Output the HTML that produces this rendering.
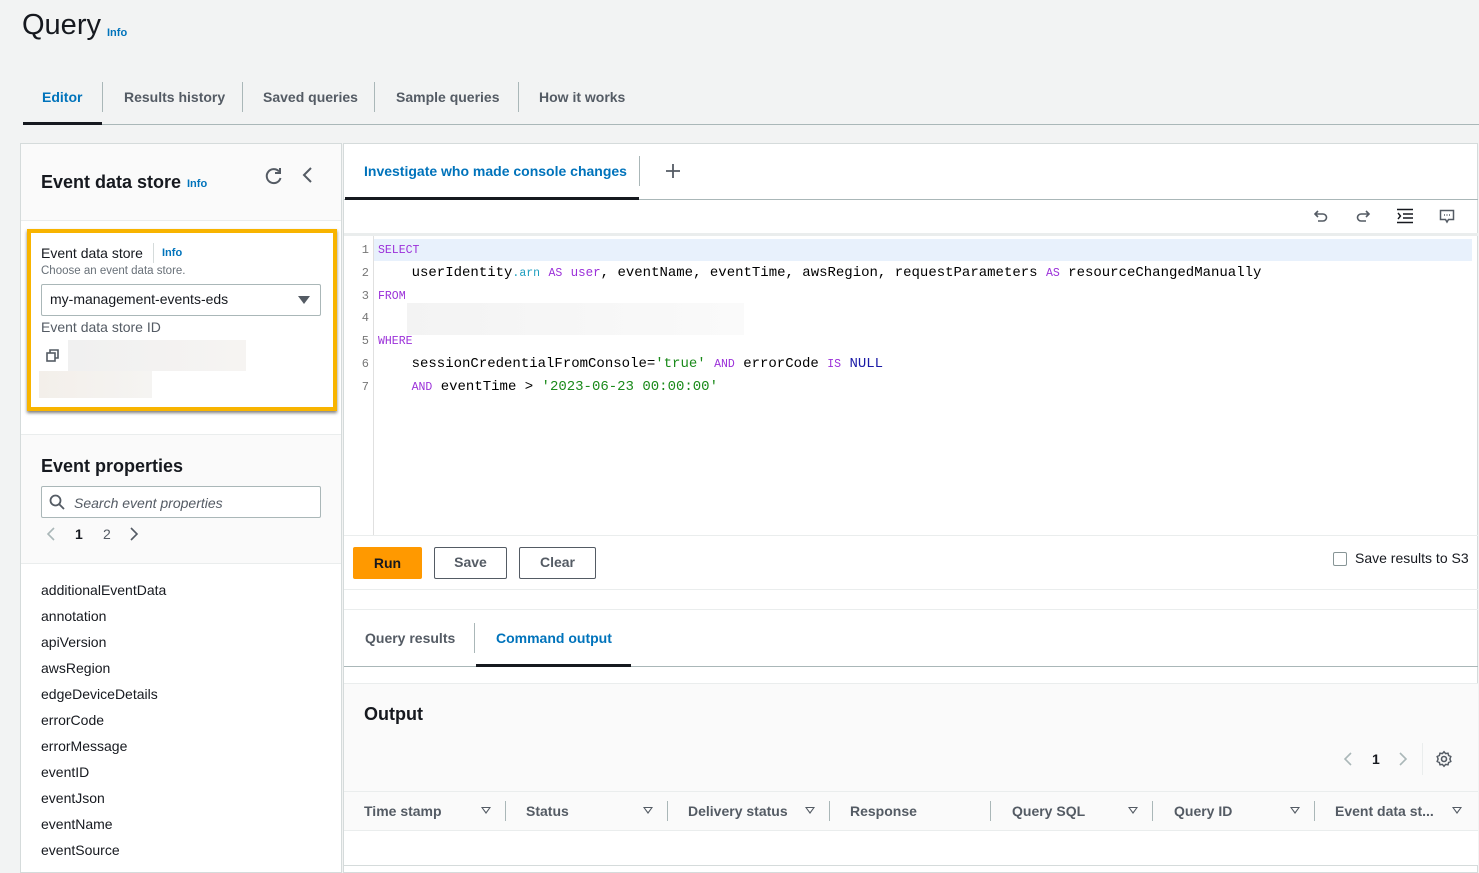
<!DOCTYPE html>
<html><head><meta charset="utf-8"><style>
*{margin:0;padding:0;box-sizing:border-box}
body{width:1479px;height:869px;overflow:hidden;background:#f2f3f3;font-family:"Liberation Sans",sans-serif;color:#16191f;position:relative;font-size:14px}
.a{position:absolute;white-space:nowrap}
.b{font-weight:bold}
.info{color:#0073bb;font-size:11px;font-weight:bold}
.tab{color:#545b64;font-weight:bold;font-size:14px}
.sep{position:absolute;width:1px;background:#aab7b8}
.hl{position:absolute;height:1px;background:#eaeded}
.mono{font-family:"Liberation Mono",monospace;font-size:14px;color:#000}
.mono div{height:22.8px;line-height:22.8px;overflow:visible}
.kw{font-size:11.5px;color:#9b30d9}
.ln{font-family:"Liberation Mono",monospace;font-size:12px;color:#777;width:14px;text-align:right}
.btn{position:absolute;border:1px solid #545b64;border-radius:2px;background:#fff;color:#545b64;font-weight:bold;text-align:center;line-height:29px}
.th{color:#545b64;font-weight:bold;font-size:14px}
.tri{position:absolute;width:0;height:0;border-left:5px solid transparent;border-right:5px solid transparent;border-top:7px solid #545b64}
.tri::after{content:"";position:absolute;left:-3px;top:-6px;border-left:3px solid transparent;border-right:3px solid transparent;border-top:4px solid #fff}
</style></head><body>
<div class="a" style="left:22px;top:9px;font-size:29px;color:#16191f">Query</div>
<div class="a info" style="left:107px;top:27px">Info</div>

<div class="a tab" style="left:42px;top:89px;color:#0073bb">Editor</div>
<div class="sep" style="left:102px;top:82px;height:30px"></div>
<div class="a tab" style="left:124px;top:89px">Results history</div>
<div class="sep" style="left:242px;top:82px;height:30px"></div>
<div class="a tab" style="left:263px;top:89px">Saved queries</div>
<div class="sep" style="left:374px;top:82px;height:30px"></div>
<div class="a tab" style="left:396px;top:89px">Sample queries</div>
<div class="sep" style="left:518px;top:82px;height:30px"></div>
<div class="a tab" style="left:539px;top:89px">How it works</div>
<div class="a" style="left:23px;top:124px;width:1456px;height:1px;background:#aab7b8"></div>
<div class="a" style="left:23px;top:122px;width:79px;height:3px;background:#16191f"></div>

<div class="a" style="left:20px;top:143px;width:322px;height:730px;background:#fff;border:1px solid #d5dbdb"></div>
<div class="a" style="left:21px;top:144px;width:320px;height:77px;background:#fafafa;border-bottom:1px solid #eaeded"></div>
<div class="a b" style="left:41px;top:172px;font-size:18px">Event data store</div>
<div class="a info" style="left:187px;top:178px">Info</div>
<svg class="a" style="left:264px;top:166px" width="20" height="20" viewBox="0 0 20 20"><path d="M15 5.5A7 7 0 1 0 16.5 12" fill="none" stroke="#545b64" stroke-width="2"/><path d="M16 2v5h-5" fill="none" stroke="#545b64" stroke-width="2"/></svg>
<svg class="a" style="left:300px;top:166px" width="16" height="18" viewBox="0 0 16 18"><path d="M11 2L4 9l7 7" fill="none" stroke="#545b64" stroke-width="2"/></svg>

<div class="a" style="left:27px;top:229px;width:310px;height:182px;border:4px solid #f8b400;background:#fff;box-shadow:0 2px 3px rgba(0,0,0,.5)"></div>
<div class="a" style="left:41px;top:245px;font-size:14px">Event data store</div>
<div class="sep" style="left:153px;top:243px;height:20px;background:#d5dbdb"></div>
<div class="a info" style="left:162px;top:247px">Info</div>
<div class="a" style="left:41px;top:265px;font-size:11.5px;color:#687078">Choose an event data store.</div>
<div class="a" style="left:41px;top:284px;width:280px;height:32px;border:1px solid #aab7b8;border-radius:2px"></div>
<div class="a" style="left:50px;top:291px;font-size:14px">my-management-events-eds</div>
<div class="a" style="left:298px;top:296px;border-left:6px solid transparent;border-right:6px solid transparent;border-top:8px solid #545b64"></div>
<div class="a" style="left:41px;top:319px;font-size:14px;color:#545b64">Event data store ID</div>
<svg class="a" style="left:45px;top:348px" width="16" height="16" viewBox="0 0 16 16"><rect x="2" y="5" width="8" height="8" fill="none" stroke="#545b64" stroke-width="1.6"/><path d="M5 5V2h8v8h-3" fill="none" stroke="#545b64" stroke-width="1.6"/></svg>
<div class="a" style="left:68px;top:340px;width:178px;height:31px;background:linear-gradient(90deg,#f0f0f0,#f6f4f2)"></div>
<div class="a" style="left:39px;top:371px;width:113px;height:27px;background:linear-gradient(90deg,#f3efea,#f5f4f2)"></div>

<div class="a" style="left:21px;top:434px;width:320px;height:130px;background:#fafafa;border-top:1px solid #eaeded;border-bottom:1px solid #eaeded"></div>
<div class="a b" style="left:41px;top:456px;font-size:18px">Event properties</div>
<div class="a" style="left:41px;top:486px;width:280px;height:32px;border:1px solid #aab7b8;border-radius:2px;background:#fff"></div>
<svg class="a" style="left:49px;top:494px" width="16" height="16" viewBox="0 0 16 16"><circle cx="6.5" cy="6.5" r="5" fill="none" stroke="#545b64" stroke-width="1.8"/><path d="M10 10l5 5" stroke="#545b64" stroke-width="1.8"/></svg>
<div class="a" style="left:74px;top:495px;font-style:italic;color:#545b64">Search event properties</div>
<svg class="a" style="left:45px;top:526px" width="12" height="16" viewBox="0 0 12 16"><path d="M9 2L3 8l6 6" fill="none" stroke="#aab7b8" stroke-width="1.6"/></svg>
<div class="a b" style="left:75px;top:526px">1</div>
<div class="a" style="left:103px;top:526px;color:#545b64">2</div>
<svg class="a" style="left:128px;top:526px" width="12" height="16" viewBox="0 0 12 16"><path d="M3 2l6 6-6 6" fill="none" stroke="#545b64" stroke-width="1.6"/></svg>

<div class="a" style="left:41px;top:577px;line-height:26px;font-size:14px">additionalEventData<br>annotation<br>apiVersion<br>awsRegion<br>edgeDeviceDetails<br>errorCode<br>errorMessage<br>eventID<br>eventJson<br>eventName<br>eventSource</div>

<div class="a" style="left:343px;top:143px;width:1135px;height:730px;background:#fff;border:1px solid #d5dbdb"></div>
<div class="a b" style="left:364px;top:163px;color:#0073bb;font-size:14px">Investigate who made console changes</div>
<div class="sep" style="left:639px;top:156px;height:30px"></div>
<svg class="a" style="left:664px;top:162px" width="18" height="18" viewBox="0 0 18 18"><path d="M9 2v14M2 9h14" stroke="#545b64" stroke-width="1.8"/></svg>
<div class="a" style="left:344px;top:199px;width:1134px;height:1px;background:#aab7b8"></div>
<div class="a" style="left:345px;top:197px;width:294px;height:3px;background:#16191f"></div>
<svg class="a" style="left:1313px;top:208px" width="16" height="16" viewBox="0 0 16 16"><path d="M5 3L2 6l3 3" fill="none" stroke="#545b64" stroke-width="1.6"/><path d="M2 6h8a3.5 3.5 0 0 1 0 7H5" fill="none" stroke="#545b64" stroke-width="1.6"/></svg>
<svg class="a" style="left:1355px;top:208px" width="16" height="16" viewBox="0 0 16 16"><path d="M11 3l3 3-3 3" fill="none" stroke="#545b64" stroke-width="1.6"/><path d="M14 6H6a3.5 3.5 0 0 0 0 7h5" fill="none" stroke="#545b64" stroke-width="1.6"/></svg>
<svg class="a" style="left:1396px;top:208px" width="18" height="16" viewBox="0 0 18 16"><path d="M1 1.5h16M7 6h10M7 10h10M1 14.5h16" stroke="#16191f" stroke-width="1.6"/><path d="M2 5l2.5 3L2 11" fill="none" stroke="#16191f" stroke-width="1.4"/></svg>
<svg class="a" style="left:1439px;top:209px" width="16" height="16" viewBox="0 0 16 16"><path d="M1.5 1.5h13v9h-5l-1.5 2.5-1.5-2.5h-5z" fill="none" stroke="#545b64" stroke-width="1.5"/><path d="M5 6h1M7.5 6h1M10 6h1" stroke="#545b64" stroke-width="1.5"/></svg>
<div class="a" style="left:344px;top:233px;width:1134px;height:3px;background:#eaeded"></div>
<div class="a" style="left:373px;top:236px;width:1px;height:300px;background:#e0e0e0"></div>
<div class="a" style="left:374px;top:239px;width:1098px;height:22px;background:#e8f1fc"></div>
<div class="a" style="left:407px;top:303px;width:337px;height:32px;background:linear-gradient(90deg,#f3f3f3,#fafafa)"></div>
<div class="a ln" style="left:355px;top:239px;line-height:22.8px">1<br>2<br>3<br>4<br>5<br>6<br>7</div>
<div class="a mono" style="left:378px;top:239px">
<div><span class="kw">SELECT</span></div>
<div>&nbsp;&nbsp;&nbsp;&nbsp;userIdentity<span style="color:#1e9ebf;font-size:11.5px">.arn</span> <span class="kw">AS</span> <span style="color:#9b30d9;font-size:12.5px">user</span>, eventName, eventTime, awsRegion, requestParameters <span class="kw">AS</span> resourceChangedManually</div>
<div><span class="kw">FROM</span></div>
<div></div>
<div><span class="kw">WHERE</span></div>
<div>&nbsp;&nbsp;&nbsp;&nbsp;sessionCredentialFromConsole=<span style="color:#1a8a1a">'true'</span> <span class="kw">AND</span> errorCode <span class="kw">IS</span> <span style="color:#1a1aa6">NULL</span></div>
<div>&nbsp;&nbsp;&nbsp;&nbsp;<span class="kw">AND</span> eventTime &gt; <span style="color:#1a8a1a">'2023-06-23 00:00:00'</span></div>
</div>
<div class="hl" style="left:344px;top:535px;width:1134px"></div>
<div class="a b" style="left:353px;top:547px;width:69px;height:32px;background:#ff9900;border-radius:2px;text-align:center;line-height:32px;color:#16191f">Run</div>
<div class="btn" style="left:434px;top:547px;width:73px;height:32px">Save</div>
<div class="btn" style="left:519px;top:547px;width:77px;height:32px">Clear</div>
<div class="a" style="left:1333px;top:552px;width:14px;height:14px;border:1px solid #879596;border-radius:2px"></div>
<div class="a" style="left:1355px;top:550px;color:#16191f">Save results to S3</div>
<div class="hl" style="left:344px;top:589px;width:1134px"></div>
<div class="hl" style="left:344px;top:609px;width:1134px"></div>
<div class="a tab" style="left:365px;top:630px">Query results</div>
<div class="sep" style="left:474px;top:623px;height:30px"></div>
<div class="a b" style="left:496px;top:630px;color:#0073bb">Command output</div>
<div class="a" style="left:344px;top:666px;width:1134px;height:1px;background:#aab7b8"></div>
<div class="a" style="left:476px;top:664px;width:155px;height:3px;background:#16191f"></div>
<div class="a" style="left:344px;top:683px;width:1134px;height:148px;background:#fafafa;border-top:1px solid #eaeded;border-bottom:1px solid #eaeded"></div>
<div class="a b" style="left:364px;top:704px;font-size:18px">Output</div>
<svg class="a" style="left:1342px;top:751px" width="12" height="16" viewBox="0 0 12 16"><path d="M9 2L3 8l6 6" fill="none" stroke="#aab7b8" stroke-width="1.6"/></svg>
<div class="a b" style="left:1372px;top:751px">1</div>
<svg class="a" style="left:1397px;top:751px" width="12" height="16" viewBox="0 0 12 16"><path d="M3 2l6 6-6 6" fill="none" stroke="#aab7b8" stroke-width="1.6"/></svg>
<div class="sep" style="left:1422px;top:743px;height:32px;background:#eaeded"></div>
<svg class="a" style="left:1435px;top:750px" width="18" height="18" viewBox="0 0 18 18"><circle cx="9" cy="9" r="2.5" fill="none" stroke="#545b64" stroke-width="1.6"/><path d="M9 1.8l1.6 1.8 2.4-.4.6 2.3 2.2 1-.9 2.5.9 2.5-2.2 1-.6 2.3-2.4-.4L9 16.2l-1.6-1.8-2.4.4-.6-2.3-2.2-1 .9-2.5-.9-2.5 2.2-1 .6-2.3 2.4.4z" fill="none" stroke="#545b64" stroke-width="1.5"/></svg>
<div class="hl" style="left:344px;top:791px;width:1134px"></div>
<div class="a th" style="left:364px;top:803px">Time stamp</div><div class="tri" style="left:481px;top:807px"></div><div class="sep" style="left:505px;top:801px;height:20px"></div>
<div class="a th" style="left:526px;top:803px">Status</div><div class="tri" style="left:643px;top:807px"></div><div class="sep" style="left:667px;top:801px;height:20px"></div>
<div class="a th" style="left:688px;top:803px">Delivery status</div><div class="tri" style="left:805px;top:807px"></div><div class="sep" style="left:829px;top:801px;height:20px"></div>
<div class="a th" style="left:850px;top:803px">Response</div><div class="sep" style="left:990px;top:801px;height:20px"></div>
<div class="a th" style="left:1012px;top:803px">Query SQL</div><div class="tri" style="left:1128px;top:807px"></div><div class="sep" style="left:1152px;top:801px;height:20px"></div>
<div class="a th" style="left:1174px;top:803px">Query ID</div><div class="tri" style="left:1290px;top:807px"></div><div class="sep" style="left:1314px;top:801px;height:20px"></div>
<div class="a th" style="left:1335px;top:803px">Event data st...</div><div class="tri" style="left:1452px;top:807px"></div>
<div class="a" style="left:344px;top:831px;width:1134px;height:35px;background:#fff;border-bottom:1px solid #d5dbdb"></div>
</body></html>
